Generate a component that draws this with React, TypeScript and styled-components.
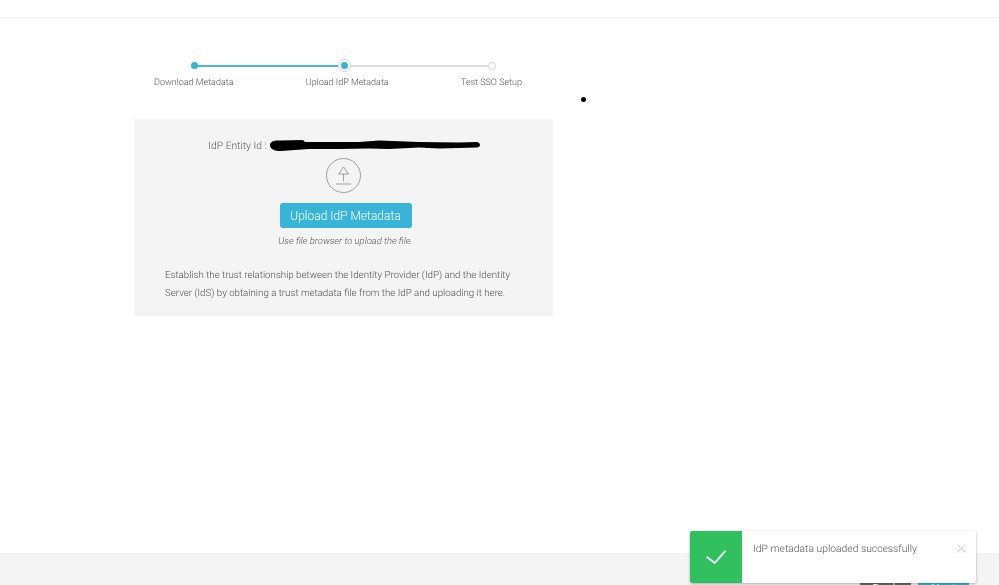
import styled, { createGlobalStyle } from "styled-components";

const GlobalStyle = createGlobalStyle`
  html, body {
    margin: 0;
    padding: 0;
    background: #fff;
  }
  body {
    font-family: "Roboto", "Liberation Sans", sans-serif;
    font-weight: 300;
    color: #555;
    text-rendering: geometricPrecision;
  }
`;

const Page = styled.div`
  position: relative;
  width: 999px;
  height: 585px;
  overflow: hidden;
  display: flex;
  flex-direction: column;
  will-change: transform;
`;

const TopBar = styled.header`
  height: 17px;
  flex: none;
  border-bottom: 1px solid #efefef;
`;

const Main = styled.main`
  flex: 1;
  padding: 42px 0 0 134px;
`;

const Stepper = styled.div`
  width: 419px;
`;

const Track = styled.div`
  display: flex;
  align-items: center;
  height: 11px;
  padding: 0 57px;
`;

const Dot = styled.span<{ $state: "done" | "current" | "todo" }>`
  flex: none;
  position: relative;
  z-index: 1;
  box-sizing: border-box;
  border-radius: 50%;
  width: ${(p) => (p.$state === "todo" ? "8px" : "7px")};
  height: ${(p) => (p.$state === "todo" ? "8px" : "7px")};
  background: ${(p) => (p.$state === "todo" ? "#fff" : "#36b3d6")};
  border: ${(p) => (p.$state === "todo" ? "1px solid #d2d2d2" : "none")};
  box-shadow: ${(p) => (p.$state === "current" ? "0 0 0 2px #fff, 0 0 0 3px #d4d4d4" : "none")};
`;

const Line = styled.span<{ $active?: boolean }>`
  flex: ${(p) => (p.$active ? "0 0 143px" : "1")};
  height: 2px;
  background: ${(p) => (p.$active ? "#4fb6d3" : "#dedede")};
`;

const Labels = styled.div`
  display: flex;
  justify-content: space-between;
  margin-top: 5px;
  padding: 0 31px 0 20px;
`;

const StepLabel = styled.span`
  font-size: 9px;
  line-height: 14px;
  color: #555;
`;

const Panel = styled.section`
  box-sizing: border-box;
  width: 419px;
  height: 197px;
  margin-top: 29px;
  background: #f4f4f4;
  display: flex;
  flex-direction: column;
  align-items: center;
  padding-top: 19px;
`;

const EntityRow = styled.div`
  display: flex;
  align-items: center;
  height: 14px;
  font-size: 10.3px;
  color: #555;
  margin-left: 2px;
  gap: 2px;
`;

const UploadIcon = styled.svg`
  display: block;
  margin-top: 5.5px;
`;

const UploadButton = styled.button`
  width: 132px;
  height: 25px;
  margin-top: 10.5px;
  margin-left: 4px;
  border: none;
  border-radius: 3px;
  background: #38b4d8;
  color: #fff;
  font-family: inherit;
  font-weight: 300;
  font-size: 12px;
  padding: 1px 0 0;
`;

const Hint = styled.p`
  margin: 8px 0 0 4px;
  font-size: 9.4px;
  line-height: 12px;
  font-style: italic;
  color: #555;
`;

const Description = styled.p`
  align-self: flex-start;
  margin: 19px 0 0 31px;
  width: 360px;
  font-size: 9.73px;
  line-height: 18px;
  color: #505050;
`;

const Footer = styled.footer`
  flex: none;
  height: 32px;
  box-sizing: border-box;
  background: #f4f4f4;
  display: flex;
  justify-content: flex-end;
  gap: 7px;
  padding: 23px 30px 0 0;
`;

const FooterButton = styled.button<{ $primary?: boolean }>`
  width: 51px;
  height: 25px;
  flex: none;
  border: none;
  border-radius: 2px;
  padding: 0;
  color: #fff;
  background: ${(p) => (p.$primary ? "#38b4d8" : "#6b6b6b")};
  font-family: inherit;
  font-size: 12px;
`;

const StrayDot = styled.span`
  position: absolute;
  left: 581px;
  top: 97px;
  width: 5px;
  height: 5px;
  border-radius: 50%;
  background: #000;
`;

const Toast = styled.div`
  position: absolute;
  left: 690px;
  top: 531px;
  width: 286px;
  height: 52px;
  display: flex;
  background: #fff;
  border-radius: 2px;
  box-shadow: 0 1px 3px rgba(0, 0, 0, 0.3);
  overflow: hidden;
`;

const ToastIcon = styled.div`
  flex: none;
  width: 52px;
  background: #32c05f;
  display: flex;
  align-items: center;
  justify-content: center;
`;

const ToastText = styled.div`
  flex: 1;
  padding: 11px 0 0 11px;
  font-size: 10.35px;
  line-height: 14px;
  color: #555;
`;

const ToastClose = styled.svg`
  flex: none;
  margin: 13px 10px 0 0;
`;

export default function App() {
  return (
    <Page>
      <GlobalStyle />
      <TopBar />
      <Main>
        <Stepper>
          <Track>
            <Dot $state="done" />
            <Line $active />
            <Dot $state="current" />
            <Line />
            <Dot $state="todo" />
          </Track>
          <Labels>
            <StepLabel>Download Metadata</StepLabel>
            <StepLabel>Upload IdP Metadata</StepLabel>
            <StepLabel>Test SSO Setup</StepLabel>
          </Labels>
        </Stepper>
        <Panel>
          <EntityRow>
            <span>IdP Entity Id :</span>
            <svg width="212" height="13" viewBox="0 0 212 13">
              <path
                d="M1 6 C1 2 6 1 12 1.5 L34 1 L36 3 L90 3 L110 1.5 L150 3 L190 3.5 L208 3 C212 4 212 8 208 8.5 L170 9.5 L150 8.5 L120 10 L100 9.5 L70 10 L40 10 L12 12 C5 12 1 10 1 6 Z"
                fill="#000"
              />
            </svg>
          </EntityRow>
          <UploadIcon width="35" height="35" viewBox="0 0 35 35" fill="none" stroke="#8a8a8a" strokeWidth="0.8">
            <circle cx="17.5" cy="17.5" r="17" />
            <path d="M17.5 9 L12.5 16 H22.5 Z M17.5 16 V23.5" />
            <path d="M10 26 H25" />
          </UploadIcon>
          <UploadButton>Upload IdP Metadata</UploadButton>
          <Hint>Use file browser to upload the file.</Hint>
          <Description>
            Establish the trust relationship between the Identity Provider (IdP) and the Identity Server (IdS) by
            obtaining a trust metadata file from the IdP and uploading it here.
          </Description>
        </Panel>
      </Main>
      <Footer>
        <FooterButton>Back</FooterButton>
        <FooterButton $primary>Next</FooterButton>
      </Footer>
      <StrayDot />
      <Toast>
        <ToastIcon>
          <svg width="20" height="14" viewBox="0 0 20 14" fill="none" stroke="#fff" strokeWidth="1.8">
            <path d="M0.6 6.8 L8.7 13 L19.4 0.8" />
          </svg>
        </ToastIcon>
        <ToastText>IdP metadata uploaded successfully</ToastText>
        <ToastClose width="9" height="9" viewBox="0 0 9 9" stroke="#cfcfcf" strokeWidth="1">
          <path d="M0.5 0.5 L8.5 8.5 M8.5 0.5 L0.5 8.5" />
        </ToastClose>
      </Toast>
    </Page>
  );
}
